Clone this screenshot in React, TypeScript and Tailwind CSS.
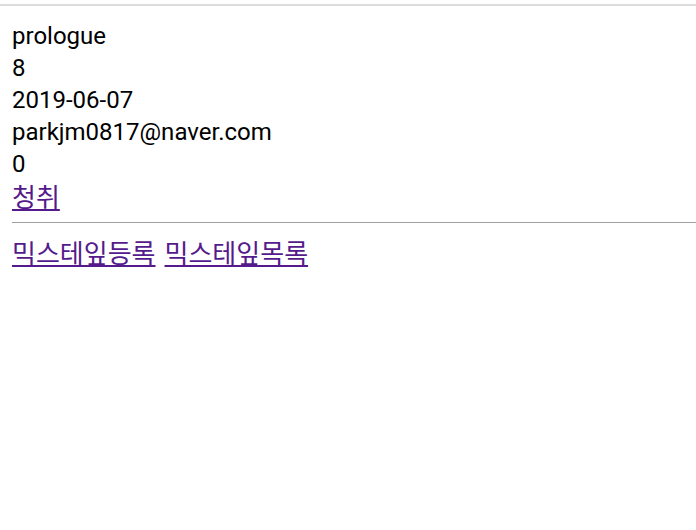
export default function App() {
  return (
    <div className="min-h-[530px] bg-white text-black font-['Roboto','Noto_Sans_CJK_KR',sans-serif]">
      <div className="pt-1">
        <div className="h-[2px] bg-[#dcdcdc]" />
      </div>
      <div className="pl-3 pt-[14px] text-[24px] leading-[32px]">
        <div>prologue</div>
        <div>8</div>
        <div>2019-06-07</div>
        <div>parkjm0817@naver.com</div>
        <div>0</div>
        <div className="font-['Noto_Sans_CJK_KR',sans-serif] text-[26px]">
          <a href="#" className="text-[#551a8b] underline">청취</a>
        </div>
        <div className="mt-[10px] h-px bg-[#a0a0a0]" />
        <div className="mt-[13px] flex gap-[9px] font-['Noto_Sans_CJK_KR',sans-serif] text-[26px]">
          <a href="#" className="text-[#551a8b] underline">믹스테잎등록</a>
          <a href="#" className="text-[#551a8b] underline">믹스테잎목록</a>
        </div>
      </div>
    </div>
  );
}
